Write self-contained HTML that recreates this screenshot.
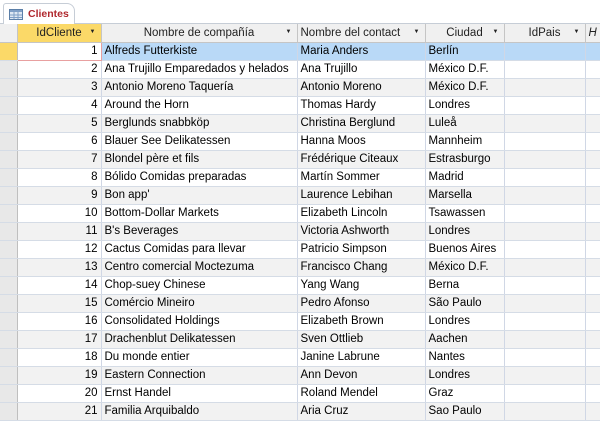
<!DOCTYPE html>
<html><head><meta charset="utf-8"><style>
*{margin:0;padding:0;box-sizing:border-box}
body{width:600px;height:415px;overflow:hidden;background:#fff;font-family:"Liberation Sans",sans-serif;font-size:11.5px;color:#000;position:relative}
.strip{position:absolute;left:0;top:0;width:600px;height:24px;background:#fff;border-bottom:1px solid #c6cdd6}
.tab{position:absolute;left:3px;top:3px;width:72px;height:22px;background:#fff;border:1px solid #c6cdd6;border-bottom:none;border-radius:3px 8px 0 0}
.tab span{position:absolute;left:24px;top:4px;color:#b0282e;font-weight:bold;font-size:10.5px}
table{position:absolute;left:0;top:24px;border-collapse:collapse;table-layout:fixed;width:615px}
td,th{height:18px;border-right:1px solid #d0d7e5;border-bottom:1px solid #d5dce6;white-space:nowrap;overflow:hidden;padding:0 3px;font-weight:normal}
th{background:#f0f0f0;border-right:1px solid #c5c5c5;border-bottom:1px solid #c5c5c5;position:relative;font-size:11.5px;color:#222}
th .a{position:absolute;right:5px;top:5px;font-size:6px}
th.sel{background:#fbd968}
td.s{background:#e8e8e8;border-right:1px solid #bfbfbf}
td.s.cur{background:#fbd968}
tr.o td{background:#f2f2f2}
tr.o td.s{background:#e8e8e8}
td.n{text-align:right}
tr.cur td{background:#b9d9f7}
tr.cur td.n{background:#fff;border:1px solid #e8a0a0}
</style></head><body>
<div class="strip"><div class="tab"><svg style="position:absolute;left:5px;top:5px" width="14" height="11"><rect x=".5" y=".5" width="13" height="10" fill="#dfe8f3" stroke="#5b7fa8"/><rect x="1" y="1" width="12" height="2" fill="#7f9fc6"/><path d="M1 6H13M1 8.5H13M5 3V10M9 3V10" stroke="#7f9fc6"/></svg><span>Clientes</span></div></div>
<table>
<colgroup><col style="width:17px"><col style="width:84px"><col style="width:196px"><col style="width:128px"><col style="width:79px"><col style="width:81px"><col style="width:30px"></colgroup>
<tr><th></th><th class="sel">IdCliente<span class="a">▼</span></th><th>Nombre de compañía<span class="a">▼</span></th><th style="text-align:left">Nombre del contact<span class="a">▼</span></th><th>Ciudad<span class="a">▼</span></th><th>IdPais<span class="a">▼</span></th><th style="text-align:left;font-style:italic">H</th></tr>
<tr class="cur"><td class="s cur"></td><td class="n">1</td><td>Alfreds Futterkiste</td><td>Maria Anders</td><td>Berlín</td><td></td><td></td></tr>
<tr><td class="s"></td><td class="n">2</td><td>Ana Trujillo Emparedados y helados</td><td>Ana Trujillo</td><td>México D.F.</td><td></td><td></td></tr>
<tr class="o"><td class="s"></td><td class="n">3</td><td>Antonio Moreno Taquería</td><td>Antonio Moreno</td><td>México D.F.</td><td></td><td></td></tr>
<tr><td class="s"></td><td class="n">4</td><td>Around the Horn</td><td>Thomas Hardy</td><td>Londres</td><td></td><td></td></tr>
<tr class="o"><td class="s"></td><td class="n">5</td><td>Berglunds snabbköp</td><td>Christina Berglund</td><td>Luleå</td><td></td><td></td></tr>
<tr><td class="s"></td><td class="n">6</td><td>Blauer See Delikatessen</td><td>Hanna Moos</td><td>Mannheim</td><td></td><td></td></tr>
<tr class="o"><td class="s"></td><td class="n">7</td><td>Blondel père et fils</td><td>Frédérique Citeaux</td><td>Estrasburgo</td><td></td><td></td></tr>
<tr><td class="s"></td><td class="n">8</td><td>Bólido Comidas preparadas</td><td>Martín Sommer</td><td>Madrid</td><td></td><td></td></tr>
<tr class="o"><td class="s"></td><td class="n">9</td><td>Bon app'</td><td>Laurence Lebihan</td><td>Marsella</td><td></td><td></td></tr>
<tr><td class="s"></td><td class="n">10</td><td>Bottom-Dollar Markets</td><td>Elizabeth Lincoln</td><td>Tsawassen</td><td></td><td></td></tr>
<tr class="o"><td class="s"></td><td class="n">11</td><td>B's Beverages</td><td>Victoria Ashworth</td><td>Londres</td><td></td><td></td></tr>
<tr><td class="s"></td><td class="n">12</td><td>Cactus Comidas para llevar</td><td>Patricio Simpson</td><td>Buenos Aires</td><td></td><td></td></tr>
<tr class="o"><td class="s"></td><td class="n">13</td><td>Centro comercial Moctezuma</td><td>Francisco Chang</td><td>México D.F.</td><td></td><td></td></tr>
<tr><td class="s"></td><td class="n">14</td><td>Chop-suey Chinese</td><td>Yang Wang</td><td>Berna</td><td></td><td></td></tr>
<tr class="o"><td class="s"></td><td class="n">15</td><td>Comércio Mineiro</td><td>Pedro Afonso</td><td>São Paulo</td><td></td><td></td></tr>
<tr><td class="s"></td><td class="n">16</td><td>Consolidated Holdings</td><td>Elizabeth Brown</td><td>Londres</td><td></td><td></td></tr>
<tr class="o"><td class="s"></td><td class="n">17</td><td>Drachenblut Delikatessen</td><td>Sven Ottlieb</td><td>Aachen</td><td></td><td></td></tr>
<tr><td class="s"></td><td class="n">18</td><td>Du monde entier</td><td>Janine Labrune</td><td>Nantes</td><td></td><td></td></tr>
<tr class="o"><td class="s"></td><td class="n">19</td><td>Eastern Connection</td><td>Ann Devon</td><td>Londres</td><td></td><td></td></tr>
<tr><td class="s"></td><td class="n">20</td><td>Ernst Handel</td><td>Roland Mendel</td><td>Graz</td><td></td><td></td></tr>
<tr class="o"><td class="s"></td><td class="n">21</td><td>Familia Arquibaldo</td><td>Aria Cruz</td><td>Sao Paulo</td><td></td><td></td></tr>
</table>
</body></html>
